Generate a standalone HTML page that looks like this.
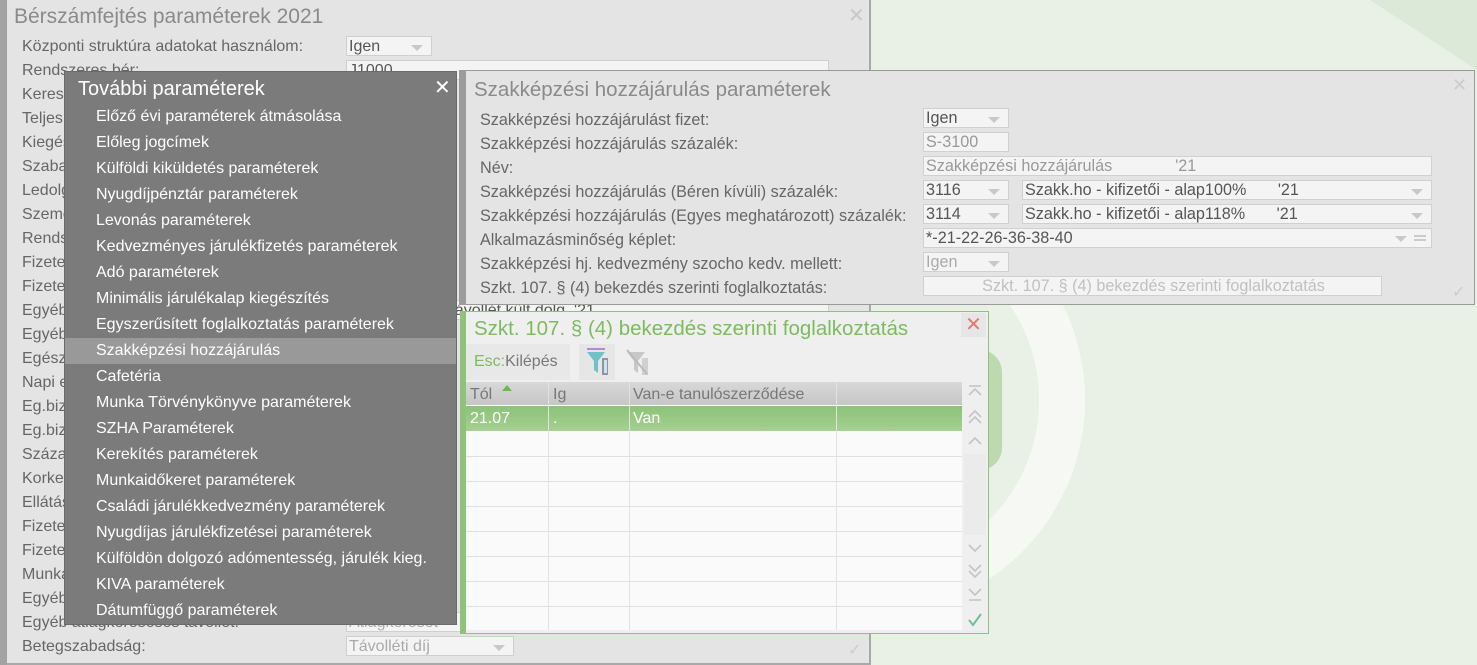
<!DOCTYPE html>
<html><head><meta charset="utf-8"><style>
*{margin:0;padding:0;box-sizing:border-box}
body{width:1477px;height:665px;overflow:hidden;background:#e9f0e6;font-family:"Liberation Sans",Arial,sans-serif;position:relative}
.a{position:absolute}
.lbl{position:absolute;font-size:16px;color:#666;white-space:nowrap}
.inp{position:absolute;background:#f4f4f4;border:1px solid #cfcfcf;font-size:16px;color:#555;padding-left:2px;line-height:19px;height:20px;white-space:nowrap;overflow:hidden}
.dd::after{content:"";position:absolute;right:8px;top:8px;border-left:6px solid transparent;border-right:6px solid transparent;border-top:6px solid #c8c8c8}
.mi{position:absolute;left:96px;font-size:16px;color:#fff;white-space:nowrap}
.rl{position:absolute;left:480px;font-size:16.2px;color:#666;white-space:nowrap}
.ri{position:absolute;background:#f4f4f4;border:1px solid #d0d0d0;font-size:16.2px;color:#555;padding-left:2px;line-height:19px;height:20px;white-space:nowrap;overflow:hidden}
.gl{position:absolute;left:466px;width:496px;height:1px;background:#e0e0e0}
.sb{position:absolute;left:964px;width:22px;height:24px;background:#efefef}
</style></head><body>
<svg class="a" style="left:0;top:0" width="1477" height="665">
<polygon points="1370,0 1477,0 1477,70" fill="#dde9d8"/>
<circle cx="870" cy="400" r="192" fill="none" stroke="#f5f8f3" stroke-width="46"/>
<rect x="900" y="350" width="102" height="120" rx="22" fill="#bcd9af"/>
</svg>
<div class="a" style="left:0;top:0;width:871px;height:665px;background:#e4e4e4;border-right:2px solid #a9a9a9;border-bottom:2px solid #a9a9a9"></div>
<div class="a" style="left:0;top:0;width:7px;height:665px;background:#a3a3a3"></div>
<div class="a" style="left:14px;top:5px;font-size:21px;color:#8a8a8a">Bérszámfejtés paraméterek 2021</div>
<div class="a" style="left:848px;top:3px;font-size:20px;color:#c8c8c8">✕</div>
<div class="lbl" style="left:22px;top:38px">Központi struktúra adatokat használom:</div>
<div class="inp dd" style="left:346px;top:36px;width:86px">Igen</div>
<div class="lbl" style="left:22px;top:62px">Rendszeres bér:</div>
<div class="inp" style="left:346px;top:60px;width:483px">J1000</div>
<div class="lbl" style="left:22px;top:86px">Kereset</div>
<div class="lbl" style="left:22px;top:110px">Teljes</div>
<div class="lbl" style="left:22px;top:134px">Kiegészítő</div>
<div class="lbl" style="left:22px;top:158px">Szabadság</div>
<div class="lbl" style="left:22px;top:182px">Ledolgozott</div>
<div class="lbl" style="left:22px;top:206px">Személyi</div>
<div class="lbl" style="left:22px;top:230px">Rendszeres</div>
<div class="lbl" style="left:22px;top:254px">Fizetett</div>
<div class="lbl" style="left:22px;top:278px">Fizetett</div>
<div class="lbl" style="left:22px;top:302px">Egyéb</div>
<div class="inp" style="left:346px;top:300px;width:483px">Egyéb fizetett távollét kült dolg.   '21</div>
<div class="lbl" style="left:22px;top:326px">Egyéb</div>
<div class="lbl" style="left:22px;top:350px">Egészségügyi</div>
<div class="lbl" style="left:22px;top:374px">Napi egyéb</div>
<div class="lbl" style="left:22px;top:398px">Eg.biztosítási</div>
<div class="lbl" style="left:22px;top:422px">Eg.biztosítási</div>
<div class="lbl" style="left:22px;top:446px">Százalék</div>
<div class="lbl" style="left:22px;top:470px">Korkedvezmény</div>
<div class="lbl" style="left:22px;top:494px">Ellátás</div>
<div class="lbl" style="left:22px;top:518px">Fizetett</div>
<div class="lbl" style="left:22px;top:542px">Fizetett</div>
<div class="lbl" style="left:22px;top:566px">Munkaidő</div>
<div class="lbl" style="left:22px;top:590px">Egyéb</div>
<div class="lbl" style="left:22px;top:614px">Egyéb átlagkereséses távollét:</div>
<div class="inp" style="left:346px;top:612px;width:168px;color:#aaa">Átlagkereset</div>
<div class="lbl" style="left:22px;top:638px">Betegszabadság:</div>
<div class="inp dd" style="left:346px;top:636px;width:168px;color:#aaa">Távolléti díj</div>
<div class="a" style="left:848px;top:640px;font-size:16px;color:#ccc">✓</div>
<div class="a" style="left:64px;top:71px;width:393px;height:554px;background:#7b7b7b;border:1px solid #6a6a6a"></div>
<div class="a" style="left:78px;top:78px;font-size:20px;color:#fff">További paraméterek</div>
<div class="a" style="left:434px;top:75px;font-size:20px;color:#fff">✕</div>
<div class="a" style="left:65px;top:338px;width:391px;height:26px;background:#999"></div>
<div class="mi" style="top:108px">Előző évi paraméterek átmásolása</div>
<div class="mi" style="top:134px">Előleg jogcímek</div>
<div class="mi" style="top:160px">Külföldi kiküldetés paraméterek</div>
<div class="mi" style="top:186px">Nyugdíjpénztár paraméterek</div>
<div class="mi" style="top:212px">Levonás paraméterek</div>
<div class="mi" style="top:238px">Kedvezményes járulékfizetés paraméterek</div>
<div class="mi" style="top:264px">Adó paraméterek</div>
<div class="mi" style="top:290px">Minimális járulékalap kiegészítés</div>
<div class="mi" style="top:316px">Egyszerűsített foglalkoztatás paraméterek</div>
<div class="mi" style="top:342px">Szakképzési hozzájárulás</div>
<div class="mi" style="top:368px">Cafetéria</div>
<div class="mi" style="top:394px">Munka Törvénykönyve paraméterek</div>
<div class="mi" style="top:420px">SZHA Paraméterek</div>
<div class="mi" style="top:446px">Kerekítés paraméterek</div>
<div class="mi" style="top:472px">Munkaidőkeret paraméterek</div>
<div class="mi" style="top:498px">Családi járulékkedvezmény paraméterek</div>
<div class="mi" style="top:524px">Nyugdíjas járulékfizetései paraméterek</div>
<div class="mi" style="top:550px">Külföldön dolgozó adómentesség, járulék kieg.</div>
<div class="mi" style="top:576px">KIVA paraméterek</div>
<div class="mi" style="top:602px">Dátumfüggő paraméterek</div>
<div class="a" style="left:459px;top:70px;width:1016px;height:235px;background:#e4e4e4;border:1px solid #9a9a9a"></div>
<div class="a" style="left:459px;top:70px;width:7px;height:235px;background:#9c9c9c"></div>
<div class="a" style="left:474px;top:78px;font-size:20.5px;color:#8a8a8a">Szakképzési hozzájárulás paraméterek</div>
<div class="a" style="left:1452px;top:75px;font-size:18px;color:#ccc">✕</div>
<div class="rl" style="top:111px">Szakképzési hozzájárulást fizet:</div>
<div class="ri dd" style="left:923px;top:108px;width:86px">Igen</div>
<div class="rl" style="top:135px">Szakképzési hozzájárulás százalék:</div>
<div class="ri" style="left:923px;top:132px;width:86px;color:#999">S-3100</div>
<div class="rl" style="top:159px">Név:</div>
<div class="ri" style="left:923px;top:156px;width:509px;color:#999">Szakképzési hozzájárulás&nbsp;&nbsp;&nbsp;&nbsp;&nbsp;&nbsp;&nbsp;&nbsp;&nbsp;&nbsp;&nbsp;&nbsp;&nbsp;&nbsp;'21</div>
<div class="rl" style="top:183px">Szakképzési hozzájárulás (Béren kívüli) százalék:</div>
<div class="ri dd" style="left:923px;top:180px;width:86px">3116</div>
<div class="ri dd" style="left:1022px;top:180px;width:410px">Szakk.ho - kifizetői - alap100%&nbsp;&nbsp;&nbsp;&nbsp;&nbsp;&nbsp;&nbsp;'21</div>
<div class="rl" style="top:207px">Szakképzési hozzájárulás (Egyes meghatározott) százalék:</div>
<div class="ri dd" style="left:923px;top:204px;width:86px">3114</div>
<div class="ri dd" style="left:1022px;top:204px;width:410px">Szakk.ho - kifizetői - alap118%&nbsp;&nbsp;&nbsp;&nbsp;&nbsp;&nbsp;&nbsp;'21</div>
<div class="rl" style="top:231px">Alkalmazásminőség képlet:</div>
<div class="ri" style="left:923px;top:228px;width:509px">*-21-22-26-36-38-40</div>
<div class="a" style="left:1395px;top:236px;border-left:6px solid transparent;border-right:6px solid transparent;border-top:6px solid #c8c8c8"></div>
<div class="a" style="left:1414px;top:235px;width:12px;height:2px;background:#ccc;box-shadow:0 4px 0 #ccc"></div>
<div class="rl" style="top:255px">Szakképzési hj. kedvezmény szocho kedv. mellett:</div>
<div class="ri dd" style="left:923px;top:252px;width:86px;color:#aaa">Igen</div>
<div class="rl" style="top:279px">Szkt. 107. § (4) bekezdés szerinti foglalkoztatás:</div>
<div class="ri" style="left:923px;top:276px;width:459px;color:#c0c0c0;text-align:center">Szkt. 107. § (4) bekezdés szerinti foglalkoztatás</div>
<div class="a" style="left:1452px;top:282px;font-size:16px;color:#ccc">✓</div>
<div class="a" style="left:460px;top:311px;width:529px;height:323px;background:#efefef;border:1px solid #8fc27a"></div>
<div class="a" style="left:460px;top:311px;width:6px;height:323px;background:#8fc27a"></div>
<div class="a" style="left:474px;top:317px;font-size:20.5px;color:#7dbb5f">Szkt. 107. § (4) bekezdés szerinti foglalkoztatás</div>
<div class="a" style="left:961px;top:313px;width:25px;height:24px;background:#e6e6e6;color:#e07a6a;font-size:20px;text-align:center;line-height:24px">✕</div>
<div class="a" style="left:466px;top:344px;width:104px;height:36px;background:#e8e8e8"></div>
<div class="a" style="left:474px;top:353px;font-size:16px;color:#7dbb5f">Esc:<span style="color:#777">Kilépés</span></div>
<div class="a" style="left:579px;top:344px;width:36px;height:36px;background:#e6e6e6"></div>
<svg class="a" style="left:583px;top:346px" width="70" height="32">
<rect x="4" y="2" width="18" height="2" fill="#b48bd0"/>
<polygon points="4,6 22,6 15,15 15,27 11,24 11,15" fill="#6fc3c8"/>
<rect x="19" y="12" width="6" height="17" fill="#8a96a8"/><rect x="21" y="14" width="3" height="13" fill="#cfe0ee"/>
<polygon points="44,6 62,6 55,15 55,27 51,24 51,15" fill="#c8c8c8"/>
<rect x="59" y="12" width="6" height="17" fill="#d0d0d0"/>
<line x1="44" y1="4" x2="64" y2="28" stroke="#bbb" stroke-width="2"/>
</svg>
<div class="a" style="left:466px;top:382px;width:496px;height:248px;background:#fafafa"></div>
<div class="a" style="left:466px;top:382px;width:496px;height:23px;background:linear-gradient(#d8d8d8,#c6c6c6)"></div>
<div class="a" style="left:470px;top:386px;font-size:16px;color:#777">Tól</div>
<div class="a" style="left:502px;top:385px;border-left:5px solid transparent;border-right:5px solid transparent;border-bottom:6px solid #6cba4a"></div>
<div class="a" style="left:553px;top:386px;font-size:16px;color:#777">Ig</div>
<div class="a" style="left:633px;top:386px;font-size:16px;color:#777">Van-e tanulószerződése</div>
<div class="a" style="left:466px;top:406px;width:496px;height:25px;background:linear-gradient(#8cc278,#a6d092)"></div>
<div class="a" style="left:470px;top:410px;font-size:16px;color:#fff">21.07</div>
<div class="a" style="left:553px;top:410px;font-size:16px;color:#fff">.</div>
<div class="a" style="left:633px;top:410px;font-size:16px;color:#fff">Van</div>
<div class="a" style="left:548px;top:382px;width:1px;height:248px;background:#e2e2e2"></div>
<div class="a" style="left:629px;top:382px;width:1px;height:248px;background:#e2e2e2"></div>
<div class="a" style="left:836px;top:382px;width:1px;height:248px;background:#e2e2e2"></div>
<div class="gl" style="top:456px"></div><div class="gl" style="top:481px"></div><div class="gl" style="top:506px"></div><div class="gl" style="top:531px"></div><div class="gl" style="top:556px"></div><div class="gl" style="top:581px"></div><div class="gl" style="top:606px"></div>
<div class="a" style="left:964px;top:382px;width:22px;height:250px;background:#ebebeb"></div>
<div class="sb" style="top:382px"></div><div class="sb" style="top:406px"></div><div class="sb" style="top:430px"></div>
<div class="sb" style="top:535px"></div><div class="sb" style="top:559px"></div><div class="sb" style="top:583px"></div><div class="sb" style="top:607px"></div>
<svg class="a" style="left:964px;top:382px" width="22" height="250" fill="none" stroke="#c4c4c4" stroke-width="1.6">
<path d="M5 4H17M5 13L11 7L17 13"/>
<path d="M5 35L11 29L17 35M5 41L11 35L17 41"/>
<path d="M5 62L11 56L17 62"/>
<path d="M5 163L11 169L17 163"/>
<path d="M5 183L11 189L17 183M5 189L11 195L17 189"/>
<path d="M5 207L11 213L17 207M5 218H17"/>
<path d="M5 238L9 243L17 232" stroke="#6cc09a" stroke-width="2"/>
</svg>
</body></html>
